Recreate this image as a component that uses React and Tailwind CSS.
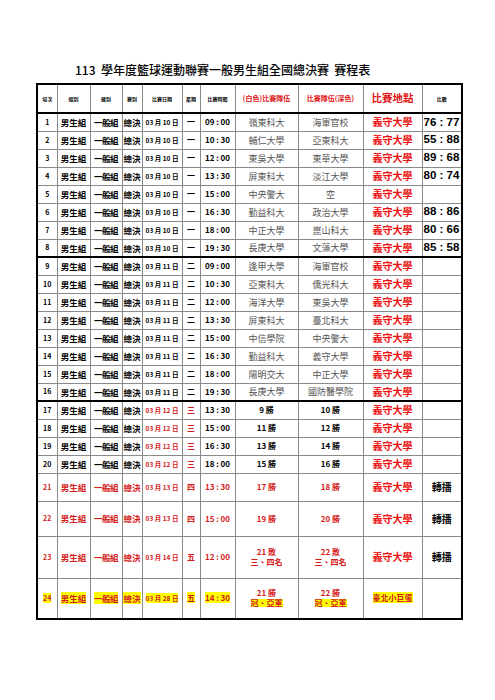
const games = [
  { n: 1, date: "03 月 10 日", day: "一", time: "09：00", a: "嶺東科大", b: "海軍官校", score: "76 : 77" },
  { n: 2, date: "03 月 10 日", day: "一", time: "10：30", a: "輔仁大學", b: "亞東科大", score: "55 : 88" },
  { n: 3, date: "03 月 10 日", day: "一", time: "12：00", a: "東吳大學", b: "東華大學", score: "89 : 68" },
  { n: 4, date: "03 月 10 日", day: "一", time: "13：30", a: "屏東科大", b: "淡江大學", score: "80 : 74" },
  { n: 5, date: "03 月 10 日", day: "一", time: "15：00", a: "中央警大", b: "空", score: "" },
  { n: 6, date: "03 月 10 日", day: "一", time: "16：30", a: "勤益科大", b: "政治大學", score: "88 : 86" },
  { n: 7, date: "03 月 10 日", day: "一", time: "18：00", a: "中正大學", b: "崑山科大", score: "80 : 66" },
  { n: 8, date: "03 月 10 日", day: "一", time: "19：30", a: "長庚大學", b: "文藻大學", score: "85 : 58", thick: true },
  { n: 9, date: "03 月 11 日", day: "二", time: "09：00", a: "逢甲大學", b: "海軍官校" },
  { n: 10, date: "03 月 11 日", day: "二", time: "10：30", a: "亞東科大", b: "僑光科大" },
  { n: 11, date: "03 月 11 日", day: "二", time: "12：00", a: "海洋大學", b: "東吳大學" },
  { n: 12, date: "03 月 11 日", day: "二", time: "13：30", a: "屏東科大", b: "臺北科大" },
  { n: 13, date: "03 月 11 日", day: "二", time: "15：00", a: "中信學院", b: "中央警大" },
  { n: 14, date: "03 月 11 日", day: "二", time: "16：30", a: "勤益科大", b: "義守大學" },
  { n: 15, date: "03 月 11 日", day: "二", time: "18：00", a: "陽明交大", b: "中正大學" },
  { n: 16, date: "03 月 11 日", day: "二", time: "19：30", a: "長庚大學", b: "國防醫學院", thick: true },
  { n: 17, date: "03 月 12 日", day: "三", time: "13：30", a: "9 勝", b: "10 勝", win: true },
  { n: 18, date: "03 月 12 日", day: "三", time: "15：00", a: "11 勝", b: "12 勝", win: true },
  { n: 19, date: "03 月 12 日", day: "三", time: "16：30", a: "13 勝", b: "14 勝", win: true },
  { n: 20, date: "03 月 12 日", day: "三", time: "18：00", a: "15 勝", b: "16 勝", win: true },
];

const finals = [
  { n: 21, h: "h-[28px]", date: "03 月 13 日", day: "四", time: "13：30", a: ["17 勝"], b: ["18 勝"], venue: "義守大學", tv: "轉播" },
  { n: 22, h: "h-[35px]", date: "03 月 13 日", day: "四", time: "15：00", a: ["19 勝"], b: ["20 勝"], venue: "義守大學", tv: "轉播" },
  { n: 23, h: "h-[42px]", date: "03 月 14 日", day: "五", time: "12：00", a: ["21 敗", "三、四名"], b: ["22 敗", "三、四名"], venue: "義守大學", tv: "轉播" },
  { n: 24, h: "h-[41px]", date: "03 月 28 日", day: "五", time: "14：30", a: ["21 勝", "冠、亞軍"], b: ["22 勝", "冠、亞軍"], venue: "臺北小巨蛋", tv: "", hl: true },
];

const td = "border border-[#8a8a8a] p-0 text-center align-middle leading-none whitespace-nowrap overflow-hidden";

function Hl({ on, children }) {
  return on ? <span className="bg-[#ffff00]">{children}</span> : children;
}

export default function App() {
  return (
    <div className="min-h-screen w-[495px] bg-white font-['Noto_Sans_CJK_TC','Noto_Sans',sans-serif] text-black">
      <h1 className="pl-[75px] pt-[62px] text-[12px] font-medium leading-[15px]">
        113&nbsp; 學年度籃球運動聯賽一般男生組全國總決賽&nbsp; 賽程表
      </h1>

      <table className="ml-[36px] mt-[6px] w-[425px] table-fixed border-collapse border-2 border-black">
        <colgroup>
          <col className="w-[20px]" />
          <col className="w-[33px]" />
          <col className="w-[32px]" />
          <col className="w-[20px]" />
          <col className="w-[40px]" />
          <col className="w-[18px]" />
          <col className="w-[35px]" />
          <col className="w-[63px]" />
          <col className="w-[65px]" />
          <col className="w-[59px]" />
          <col className="w-[40px]" />
        </colgroup>
        <thead>
          <tr className="h-[29px] border-b-2 border-black text-[5px] font-bold">
            <th className={td}>場次</th>
            <th className={td}>組別</th>
            <th className={td}>級別</th>
            <th className={td}>賽別</th>
            <th className={td}>比賽日期</th>
            <th className={td}>星期</th>
            <th className={td}>比賽時間</th>
            <th className={`${td} text-[7px] text-[#e01515]`}>(白色)比賽隊伍</th>
            <th className={`${td} text-[7px] text-[#e01515]`}>比賽隊伍(深色)</th>
            <th className={`${td} text-[10.5px] text-[#e01515]`}>比賽地點</th>
            <th className={td}>比數</th>
          </tr>
        </thead>
        <tbody>
          {games.map((g) => (
            <tr key={g.n} className={`h-[18px] font-bold ${g.thick ? "border-b-2 border-black" : ""}`}>
              <td className={`${td} text-[7px]`}>{g.n}</td>
              <td className={`${td} text-[8.5px]`}>男生組</td>
              <td className={`${td} text-[8.5px] tracking-[-0.5px]`}>一般組</td>
              <td className={`${td} text-[8.5px]`}>總決</td>
              <td className={`${td} text-[6.5px] ${g.win ? "text-[#d42020]" : ""}`}>{g.date}</td>
              <td className={`${td} text-[8px] ${g.win ? "text-[#d42020]" : ""}`}>{g.day}</td>
              <td className={`${td} text-[8px]`}>{g.time.replace("：", " : ")}</td>
              <td className={`${td} ${g.win ? "text-[8px] font-bold" : "text-[9px] font-normal text-[#555]"}`}>{g.a}</td>
              <td className={`${td} ${g.win ? "text-[8px] font-bold" : "text-[9px] font-normal text-[#555]"}`}>{g.b}</td>
              <td className={`${td} text-[10px] text-[#ee1111]`}>義守大學</td>
              <td className={`${td} pl-[1px] text-left font-['Liberation_Sans',sans-serif] text-[11.5px] font-bold`}>{g.score}</td>
            </tr>
          ))}
          {finals.map((g) => (
            <tr key={g.n} className={`${g.h} font-bold text-[#d42020]`}>
              <td className={`${td} text-[7px]`}><Hl on={g.hl}>{g.n}</Hl></td>
              <td className={`${td} text-[8.5px]`}><Hl on={g.hl}>男生組</Hl></td>
              <td className={`${td} text-[8.5px] tracking-[-0.5px]`}><Hl on={g.hl}>一般組</Hl></td>
              <td className={`${td} text-[8.5px]`}><Hl on={g.hl}>總決</Hl></td>
              <td className={`${td} text-[6.5px]`}><Hl on={g.hl}>{g.date}</Hl></td>
              <td className={`${td} text-[8px]`}><Hl on={g.hl}>{g.day}</Hl></td>
              <td className={`${td} text-[8px]`}><Hl on={g.hl}>{g.time.replace("：", " : ")}</Hl></td>
              {[g.a, g.b].map((lines, i) => (
                <td key={i} className={`${td} text-[8px]`}>
                  <div className="flex flex-col items-center gap-[2px]">
                    <span>{lines[0]}</span>
                    {lines[1] && <Hl on={g.hl}>{lines[1]}</Hl>}
                  </div>
                </td>
              ))}
              <td className={`${td} ${g.hl ? "text-[8px] text-[#d42020]" : "text-[10px] text-[#ee1111]"}`}><Hl on={g.hl}>{g.venue}</Hl></td>
              <td className={`${td} text-[10px] text-black`}>{g.tv}</td>
            </tr>
          ))}
        </tbody>
      </table>
    </div>
  );
}
